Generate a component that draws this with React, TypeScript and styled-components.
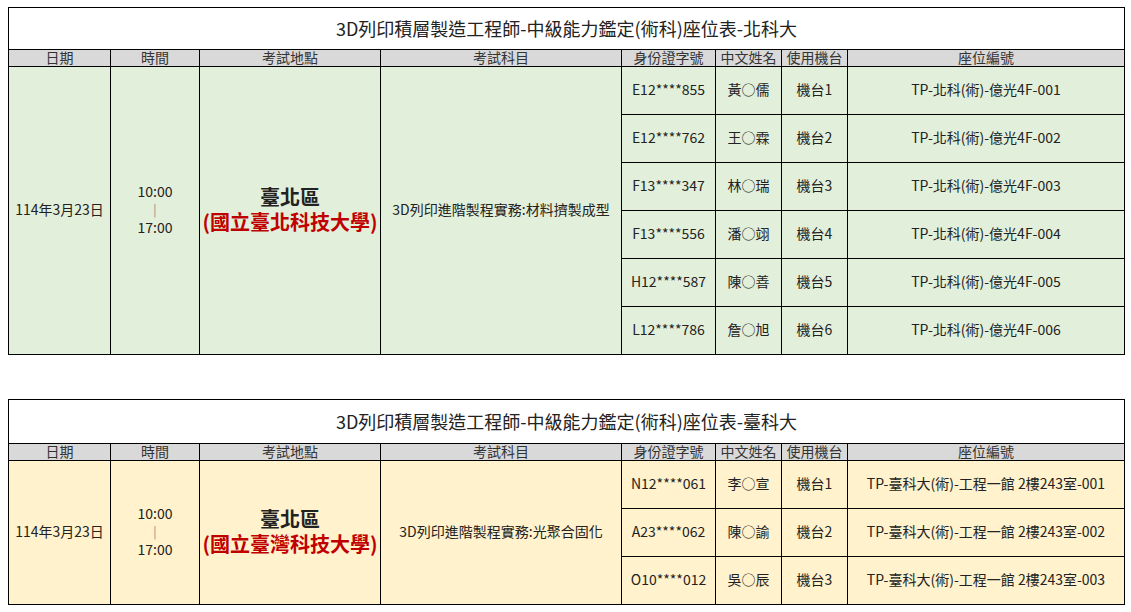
import React from "react";
import styled, { createGlobalStyle } from "styled-components";

const GlobalStyle = createGlobalStyle`
  html, body { margin: 0; padding: 0; background: #fff; }
  body { font-family: "Noto Sans CJK TC", "Noto Sans", sans-serif; color: #222; }
`;

const Page = styled.div`
  padding: 7px 0 0 8px;
  display: flex;
  flex-direction: column;
  gap: 44px;
  width: 1117px;
`;

const Sheet = styled.div<{ $titleH: number; $rows: number }>`
  display: grid;
  grid-template-columns: 101px 88px 180px 240px 93px 65px 65px 276px;
  grid-template-rows: ${(p) => p.$titleH}px 16px repeat(${(p) => p.$rows}, 47px);
  gap: 1px;
  padding: 1px;
  background: #000;
`;

const Cell = styled.div<{ $bg: string; $span?: number }>`
  background: ${(p) => p.$bg};
  display: flex;
  align-items: center;
  justify-content: center;
  text-align: center;
  font-size: 14px;
  line-height: 18px;
  padding-bottom: 4px;
  box-sizing: border-box;
  white-space: nowrap;
  ${(p) => (p.$span ? `grid-row: span ${p.$span};` : "")}
`;

const Title = styled.div`
  grid-column: 1 / -1;
  background: #fff;
  display: flex;
  align-items: center;
  justify-content: center;
  font-size: 18px;
  padding-bottom: 2px;
  box-sizing: border-box;
  color: #222;
`;

const Head = styled.div`
  background: #d9d9d9;
  display: flex;
  align-items: center;
  justify-content: center;
  font-size: 14px;
  line-height: 14px;
  padding-bottom: 2px;
  box-sizing: border-box;
  color: #333;
`;

const Stack = styled.div`
  display: flex;
  flex-direction: column;
  align-items: center;
`;

const TimeLine = styled.span<{ $bar?: boolean }>`
  display: block;
  line-height: 18px;
  ${(p) => (p.$bar ? "color: #888; font-size: 12px;" : "")}
`;

const Region = styled.span`
  display: block;
  font-size: 20px;
  font-weight: bold;
  line-height: 25px;
  color: #222;
`;

const School = styled.span`
  display: block;
  font-size: 20px;
  font-weight: bold;
  line-height: 25px;
  color: #c00000;
`;

type Row = { id: string; name: string; machine: string; seat: string };

type Data = {
  title: string;
  bg: string;
  titleH: number;
  school: string;
  subject: string;
  rows: Row[];
};

const headers = ["日期", "時間", "考試地點", "考試科目", "身份證字號", "中文姓名", "使用機台", "座位編號"];

const tables: Data[] = [
  {
    title: "3D列印積層製造工程師-中級能力鑑定(術科)座位表-北科大",
    bg: "#e2efda",
    titleH: 41,
    school: "(國立臺北科技大學)",
    subject: "3D列印進階製程實務:材料擠製成型",
    rows: [
      { id: "E12****855", name: "黃○儒", machine: "機台1", seat: "TP-北科(術)-億光4F-001" },
      { id: "E12****762", name: "王○霖", machine: "機台2", seat: "TP-北科(術)-億光4F-002" },
      { id: "F13****347", name: "林○瑞", machine: "機台3", seat: "TP-北科(術)-億光4F-003" },
      { id: "F13****556", name: "潘○翊", machine: "機台4", seat: "TP-北科(術)-億光4F-004" },
      { id: "H12****587", name: "陳○善", machine: "機台5", seat: "TP-北科(術)-億光4F-005" },
      { id: "L12****786", name: "詹○旭", machine: "機台6", seat: "TP-北科(術)-億光4F-006" },
    ],
  },
  {
    title: "3D列印積層製造工程師-中級能力鑑定(術科)座位表-臺科大",
    bg: "#fff2cc",
    titleH: 43,
    school: "(國立臺灣科技大學)",
    subject: "3D列印進階製程實務:光聚合固化",
    rows: [
      { id: "N12****061", name: "李○宣", machine: "機台1", seat: "TP-臺科大(術)-工程一館 2樓243室-001" },
      { id: "A23****062", name: "陳○諭", machine: "機台2", seat: "TP-臺科大(術)-工程一館 2樓243室-002" },
      { id: "O10****012", name: "吳○辰", machine: "機台3", seat: "TP-臺科大(術)-工程一館 2樓243室-003" },
    ],
  },
];

function SeatTable({ d }: { d: Data }) {
  const n = d.rows.length;
  return (
    <Sheet $titleH={d.titleH} $rows={n}>
      <Title>{d.title}</Title>
      {headers.map((h) => (
        <Head key={h}>{h}</Head>
      ))}
      {d.rows.map((r, i) => (
        <React.Fragment key={r.id}>
          {i === 0 && (
            <>
              <Cell $bg={d.bg} $span={n}>114年3月23日</Cell>
              <Cell $bg={d.bg} $span={n}>
                <Stack>
                  <TimeLine>10:00</TimeLine>
                  <TimeLine $bar>|</TimeLine>
                  <TimeLine>17:00</TimeLine>
                </Stack>
              </Cell>
              <Cell $bg={d.bg} $span={n}>
                <Stack>
                  <Region>臺北區</Region>
                  <School>{d.school}</School>
                </Stack>
              </Cell>
              <Cell $bg={d.bg} $span={n}>{d.subject}</Cell>
            </>
          )}
          <Cell $bg={d.bg}>{r.id}</Cell>
          <Cell $bg={d.bg}>{r.name}</Cell>
          <Cell $bg={d.bg}>{r.machine}</Cell>
          <Cell $bg={d.bg}>{r.seat}</Cell>
        </React.Fragment>
      ))}
    </Sheet>
  );
}

export default function App() {
  return (
    <>
      <GlobalStyle />
      <Page>
        {tables.map((t) => (
          <SeatTable key={t.title} d={t} />
        ))}
      </Page>
    </>
  );
}
